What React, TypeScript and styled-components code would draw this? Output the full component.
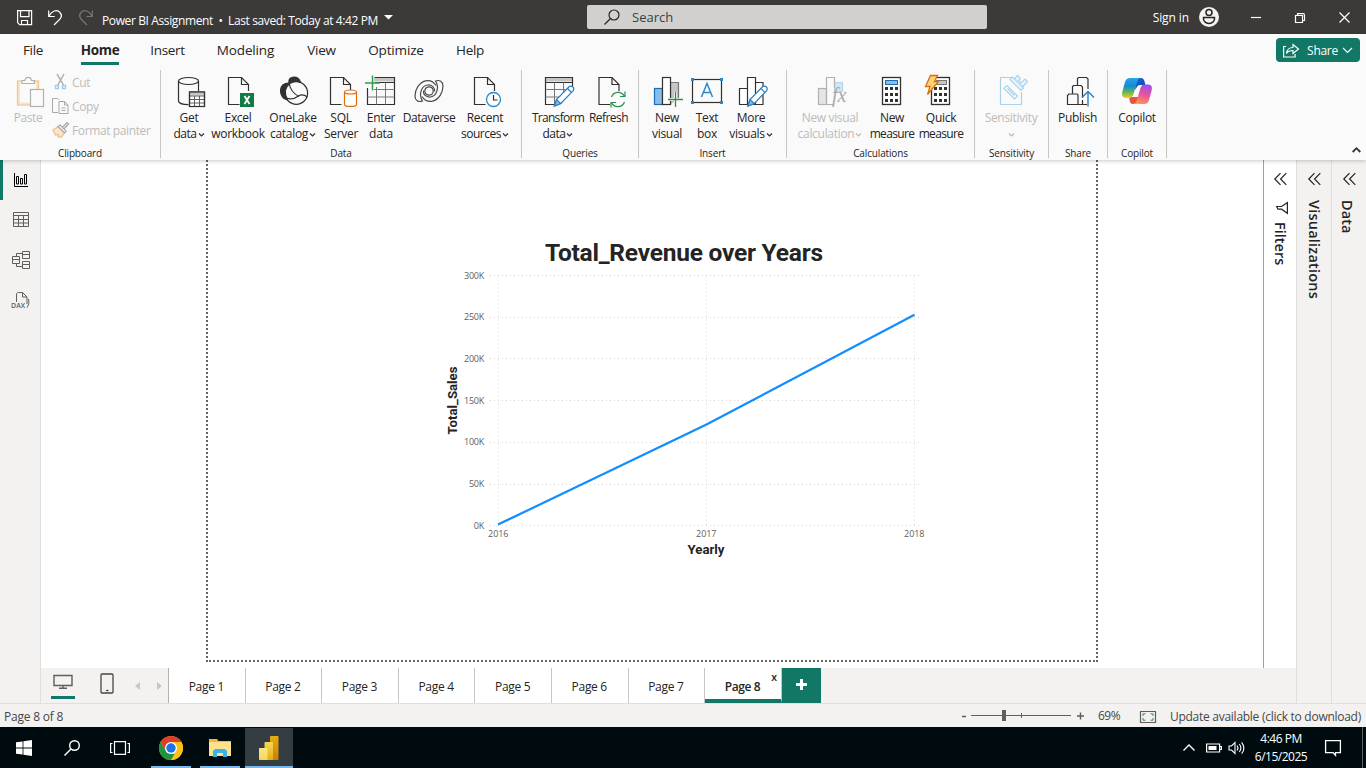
import React from "react";
import styled, { createGlobalStyle } from "styled-components";

const GREEN = "#117865";
const INK = "#323130";

const GlobalStyle = createGlobalStyle`
  * { box-sizing: border-box; }
  html, body { margin: 0; padding: 0; overflow: hidden; }
  body { font-family: "Open Sans", "Noto Sans", sans-serif; font-size: 12px; color: #252423; background: #fff; }
  svg { display: block; flex: none; overflow: visible; }
  button { font: inherit; color: inherit; border: 0; background: none; padding: 0; margin: 0; }
`;

const Screen = styled.div`
  width: 1366px;
  height: 768px;
  display: flex;
  flex-direction: column;
  overflow: hidden;
`;

/* ---------- Title bar ---------- */

const TitleBar = styled.header`
  height: 34px;
  flex: none;
  background: #3b3a39;
  color: #fff;
  display: flex;
  align-items: center;
`;

const QuickAccess = styled.div`
  width: 587px;
  display: flex;
  align-items: center;
  padding-left: 17px;
`;

const QuickIcons = styled.div`
  display: flex;
  gap: 15px;
  width: 85px;
  padding-top: 1px;
`;

const DocumentTitle = styled.span`
  white-space: pre;
  font-size: 12px;
  letter-spacing: -0.38px;
  padding-top: 6px;
  margin-right: 6px;
`;

const SearchBox = styled.div`
  width: 400px;
  height: 24px;
  background: #d2d0ce;
  border-radius: 2px;
  display: flex;
  align-items: center;
  gap: 12px;
  padding-left: 17px;
  color: #2b4743;
  font-size: 13px;
`;

const Account = styled.div`
  width: 232px;
  display: flex;
  align-items: center;
  justify-content: flex-end;
  gap: 10px;
  letter-spacing: -0.1px;
`;

const WindowButtons = styled.div`
  display: flex;
  margin-left: 15px;
`;

const WindowButton = styled.button`
  width: 44px;
  height: 34px;
  display: flex;
  align-items: center;
  justify-content: center;
  padding-top: 1px;
`;

/* ---------- Ribbon ---------- */

const Ribbon = styled.section`
  height: 126px;
  flex: none;
  background: #fafafa;
  box-shadow: 0 1px 4px rgba(0, 0, 0, 0.22);
  position: relative;
  z-index: 2;
`;

const RibbonTabs = styled.nav`
  height: 34px;
  display: flex;
  align-items: flex-start;
  padding-left: 23px;
  gap: 32px;
`;

const RibbonTab = styled.span<{ $w: number; $active?: boolean; $gap?: number; $ls?: number }>`
  width: ${(p) => p.$w}px;
  margin-right: ${(p) => p.$gap ?? 0}px;
  height: 31px;
  line-height: 32px;
  font-size: 13.5px;
  display: flex;
  justify-content: center;
  letter-spacing: ${(p) => p.$ls ?? -0.3}px;
  font-weight: ${(p) => (p.$active ? 700 : 400)};
  border-bottom: ${(p) => (p.$active ? `3px solid ${GREEN}` : "0")};
`;

const ShareButton = styled.button`
  margin: 4px 6px 0 auto;
  width: 84px;
  height: 24px;
  border-radius: 4px;
  background: ${GREEN};
  color: #fff;
  display: flex;
  align-items: center;
  justify-content: center;
  gap: 4px;
  letter-spacing: -0.3px;
`;

const ShareText = styled.span`
  margin-left: 3px;
  padding-top: 1px;
`;

const RibbonGroups = styled.div`
  display: flex;
  height: 92px;
  padding-top: 2px;
`;

const Group = styled.div<{ $w: number }>`
  width: ${(p) => p.$w}px;
  height: 88px;
  border-right: 1px solid #c8c6c4;
  display: flex;
  flex-direction: column;
`;

const GroupBody = styled.div<{ $pad: number }>`
  height: 76px;
  display: flex;
  padding-left: ${(p) => p.$pad}px;
`;

const GroupName = styled.div`
  font-size: 10px;
  line-height: 15px;
  text-align: center;
  letter-spacing: -0.15px;
`;

const BigButton = styled.button<{ $w: number; $disabled?: boolean }>`
  width: ${(p) => p.$w}px;
  height: 76px;
  padding-top: 5px;
  display: flex;
  flex-direction: column;
  align-items: center;
  color: ${(p) => (p.$disabled ? "#bdbbb9" : "#252423")};
`;

const BigButtonLine = styled.span<{ $ls?: number }>`
  height: 16px;
  line-height: 16px;
  font-size: 12px;
  white-space: nowrap;
  display: flex;
  align-items: center;
  gap: 1px;
  letter-spacing: ${(p) => p.$ls ?? -0.3}px;
  &:first-of-type { margin-top: 3px; }
`;

const SmallButtons = styled.div`
  display: flex;
  flex-direction: column;
  padding: 0 0 0 9px;
`;

const SmallButton = styled.button`
  height: 24px;
  display: flex;
  align-items: center;
  gap: 3px;
  color: #bdbbb9;
  letter-spacing: -0.38px;
  white-space: nowrap;
`;

const CollapseSlot = styled.div`
  flex: 1;
  display: flex;
  align-items: flex-end;
  justify-content: flex-end;
  padding: 0 5px 7px 0;
`;

/* ---------- Workspace ---------- */

const Workspace = styled.main`
  height: 543px;
  flex: none;
  display: flex;
`;

const ViewRail = styled.nav`
  width: 41px;
  background: #f3f2f1;
  border-right: 1px solid #e1dfdd;
`;

const RailItem = styled.div<{ $active?: boolean }>`
  height: 40px;
  display: flex;
  align-items: center;
  justify-content: center;
  border-left: 3px solid ${(p) => (p.$active ? GREEN : "transparent")};
  padding-right: 1px;
`;

const Center = styled.div`
  width: 1255px;
  display: flex;
  flex-direction: column;
`;

const CanvasRow = styled.div`
  height: 508px;
  display: flex;
`;

const Canvas = styled.div`
  width: 1222px;
  padding-left: 165px;
  background: #fff;
`;

const ReportPage = styled.div`
  width: 892px;
  height: 502px;
  border: 2px dotted #666;
  border-top: 0;
`;

const Pane = styled.aside<{ $w: number; $line: string; $bg: string }>`
  width: ${(p) => p.$w}px;
  background: ${(p) => p.$bg};
  border-left: 1px solid ${(p) => p.$line};
  display: flex;
  flex-direction: column;
  align-items: center;
  padding-top: 13px;
`;

const PaneTitle = styled.span<{ $top: number; $ls?: number; $pull?: number }>`
  writing-mode: vertical-rl;
  font-size: 14.5px;
  line-height: 18px;
  font-weight: 600;
  margin-top: ${(p) => p.$top}px;
  margin-right: ${(p) => p.$pull ?? 0}px;
  letter-spacing: ${(p) => p.$ls ?? -0.1}px;
  white-space: nowrap;
`;

const FilterMark = styled.div`
  margin: 17px 0 0 3px;
`;

const PageBar = styled.div`
  height: 35px;
  background: #f3f2f1;
  display: flex;
`;

const LayoutSwitch = styled.div`
  width: 128px;
  flex: none;
  display: flex;
  border-right: 1px solid #b3b0ad;
  padding-left: 10px;
`;

const LayoutOption = styled.div<{ $active?: boolean }>`
  width: 24px;
  flex: none;
  height: 31px;
  margin-right: 20px;
  display: flex;
  justify-content: center;
  padding-top: 5px;
  border-bottom: 3px solid ${(p) => (p.$active ? GREEN : "transparent")};
`;

const PageArrows = styled.div`
  display: flex;
  gap: 17px;
  padding-top: 14px;
  margin-left: -4px;
`;

const PageTab = styled.div<{ $active?: boolean }>`
  width: 76.6px;
  flex: none;
  height: 35px;
  background: #fff;
  border-right: 1px solid #c8c6c4;
  border-bottom: ${(p) => (p.$active ? `4px solid ${GREEN}` : "0")};
  line-height: 37px;
  font-size: 12px;
  font-weight: ${(p) => (p.$active ? 600 : 400)};
  letter-spacing: ${(p) => (p.$active ? -0.4 : -0.3)}px;
  text-align: center;
  padding-right: 1px;
  position: relative;
`;

const CloseMark = styled.span`
  position: absolute;
  right: 4px;
  top: 2px;
  font-size: 10.5px;
  line-height: 14px;
  font-weight: 600;
`;

const AddPage = styled.button`
  width: 39px;
  height: 35px;
  background: ${GREEN};
  display: flex;
  align-items: center;
  justify-content: center;
  padding-bottom: 2px;
`;

/* ---------- Status bar ---------- */

const StatusBar = styled.footer`
  height: 24px;
  flex: none;
  background: #f3f2f1;
  border-top: 1px solid #e1dfdd;
  display: flex;
  align-items: center;
  color: #484644;
  padding: 2px 4px 0;
  letter-spacing: -0.2px;
`;

const ZoomTools = styled.div`
  margin-left: auto;
  display: flex;
  align-items: center;
`;

const ZoomScale = styled.div`
  margin-top: -1px;
`;

const ZoomValue = styled.span`
  width: 30px;
  margin: -2px 12px 0 12px;
  letter-spacing: -0.5px;
`;

const UpdateNote = styled.span`
  width: 192px;
  margin-left: 14px;
  white-space: nowrap;
  letter-spacing: -0.27px;
`;

/* ---------- Taskbar ---------- */

const Taskbar = styled.footer`
  height: 41px;
  flex: none;
  background: #000b10;
  color: #fff;
  display: flex;
  align-items: stretch;
`;

const TaskItem = styled.div<{ $w: number; $running?: boolean; $focused?: boolean; $gap?: number }>`
  width: ${(p) => p.$w}px;
  margin-right: ${(p) => p.$gap ?? 0}px;
  margin-top: 1px;
  padding-top: ${(p) => (p.$running ? 2 : 0)}px;
  display: flex;
  align-items: center;
  justify-content: center;
  background: ${(p) => (p.$focused ? "#343d41" : "transparent")};
  border-bottom: ${(p) => (p.$running ? "2px solid #76b9ed" : "0")};
`;

const Tray = styled.div`
  margin-left: auto;
  display: flex;
  align-items: center;
`;

const Clock = styled.div`
  width: 62px;
  margin: 0 13px 0 5px;
  text-align: center;
  line-height: 18px;
  letter-spacing: -0.5px;
`;

const DesktopEdge = styled.div`
  width: 4px;
  height: 41px;
  margin-left: 21px;
  border-left: 1px solid #5c6366;
`;

/* ---------- Icons ---------- */

type IconProps = { w?: number; h?: number; children: React.ReactNode; color?: string; sw?: number };

const Icon = ({ w = 32, h = 32, color = INK, sw = 1.2, children }: IconProps) => (
  <svg width={w} height={h} viewBox={`0 0 ${w} ${h}`} fill="none" stroke={color} strokeWidth={sw}>
    {children}
  </svg>
);

const Caret = ({ color = INK }: { color?: string }) => (
  <svg width="7" height="5" viewBox="0 0 7 5" fill="none" stroke={color} strokeWidth="1.2">
    <path d="M1 1.500l2.500 2.500L6 1.500" />
  </svg>
);

const Sheet = ({ x }: { x: number }) => (
  <g>
    <path d={`M${x + 11} 29.5H${x}V2.5H${x + 13}L${x + 20} 9.5V16`} />
    <path d={`M${x + 13} 2.5V9.5H${x + 20}`} />
  </g>
);

const Pencil = ({ x }: { x: number }) => (
  <g stroke="#2b7fc0">
    <path d={`M${x} 31l2-6.5L${x + 14.5} 11.8c2.5-2 6 .8 4.2 3.8L${x + 6.3} 28.5z`} fill="#fff" />
    <path d={`M${x} 31l2-6.5 4.3 4z`} fill="#7fbdeb" />
    <path d={`M${x + 13} 13.5l4 4`} />
  </g>
);

const PasteIcon = () => (
  <Icon color="#b3b1af">
    <path d="M11 7H6.5V29H18M21 7h4.5v7" stroke="#f7e6c9" strokeWidth="3" />
    <path d="M10 6H5.5V30H18M22 6h4.5v8" stroke="#f2c48d" />
    <path d="M10 8.5V5.5h3a3.2 3.2 0 0 1 6.4 0h3v3z" fill="#fafafa" />
    <rect x="18.5" y="14.5" width="13" height="17" fill="#fafafa" />
  </Icon>
);

const CutIcon = () => (
  <Icon w={16} h={16} color="#aaa8a6">
    <path d="M4 0l6.5 11M11 0L4.8 11" strokeWidth="1.4" />
    <path d="M2.5 11.5h3v3h-3zM9.5 11.5h3v3h-3z" stroke="#9fcdea" strokeWidth="1.4" />
  </Icon>
);

const CopyIcon = () => (
  <Icon w={16} h={16} color="#aaa8a6" sw={1}>
    <path d="M5 14.5H-.5v-14H4.5L6 2" />
    <path d="M6 3.5h5.5l3.5 3.5v8.5H6zM11.5 3.5V7H15M8.5 10h4M8.5 12.5h4" />
  </Icon>
);

const PainterIcon = () => (
  <Icon w={16} h={16} color="#aaa8a6">
    <path d="M0 8l6-4 6 6-4 5.500-3-1 .5-2-3 .5z" fill="#fbe3cb" stroke="#f0bd8d" />
    <path d="M5 4.500l2-1.500 6 6-1.500 2zM9.500 5.500L14 .5l1.500 1.500-4.500 5" fill="#fafafa" />
  </Icon>
);

const GetDataIcon = () => (
  <Icon>
    <ellipse cx="15.5" cy="6" rx="10" ry="3.5" />
    <path d="M5.500 6v20c0 2 4 3.600 10 3.600M25.500 6v10" />
    <rect x="16.5" y="17" width="15" height="14.5" fill="#fff" />
    <path d="M17 19h14" stroke="#c8c6c4" strokeWidth="3" />
    <path d="M16.500 21h15M16.500 24.500h15M16.500 28h15M21.500 21v10.500M26.500 21v10.500" stroke="#605e5c" strokeWidth="1" />
    <path d="M16.500 17h15v14.500h-15z" />
  </Icon>
);

const ExcelIcon = () => (
  <Icon>
    <Sheet x={6.5} />
    <rect x="18" y="18" width="14" height="14" fill="#107c41" stroke="none" />
    <path d="M22.500 21l5 8M27.500 21l-5 8" stroke="#fff" strokeWidth="1.8" />
  </Icon>
);

const OneLakeIcon = () => (
  <Icon>
    <path d="M12 8C11 4 14 2 17 2s5.500 1.500 6.500 5.500C20 6 15 6 12 8z" fill={INK} />
    <path d="M11.500 8C8 11 7 19 10.500 25C6 24.500 3.500 20 3.500 15.500C3.500 11 7 8 11.500 8z" fill={INK} />
    <circle cx="19.3" cy="18" r="11.3" />
    <path d="M12 8c1 6 5 11 10 13.500M9.500 23c5 2 8 1 12-2 3-2 6-1 9 1" />
  </Icon>
);

const SqlIcon = () => (
  <Icon>
    <Sheet x={5.5} />
    <path d="M19.500 17v12.500c0 2.600 12 2.600 12 0V17" fill="#fff" stroke="#d8700d" />
    <ellipse cx="25.5" cy="17" rx="6" ry="2" fill="#fff" stroke="#d8700d" />
  </Icon>
);

const EnterDataIcon = () => (
  <Icon>
    <path d="M9 4.500h20" stroke="#c8c6c4" strokeWidth="4" />
    <path d="M2.500 13v16.500h27v-27H9.500M10 7.500h19.500" />
    <path d="M9 14.500h20.500M2.500 22h27M11.500 12v17.500M20.500 7.500v22" stroke="#797775" strokeWidth="1" />
    <path d="M0 8h15M7.500 0.500v15" stroke="#2e9e4f" strokeWidth="1.5" />
  </Icon>
);

const DataverseIcon = () => (
  <Icon color="#4b4a48">
    <path d="M23 10.500C20.500 6.500 16.500 5 12.500 5.800C6 7.500 2 14.500 2 21C2 25.500 5.500 27.500 9.500 26C5.500 20 8 11 14.500 10C19 9.500 22 12.500 21.500 16.500" />
    <path d="M9 21.500C11.500 25.500 15.500 27 19.500 26.200C26 24.500 30 17.500 30 11C30 6.500 26.500 4.500 22.500 6C26.500 12 24 21 17.500 22C13 22.500 10 19.500 10.500 15.500" />
    <circle cx="16" cy="16" r="4.2" />
  </Icon>
);

const RecentIcon = () => (
  <Icon>
    <Sheet x={5.5} />
    <circle cx="24.5" cy="24.5" r="7" fill="#fff" stroke="#2b88c8" strokeWidth="1.3" />
    <path d="M24.500 20v5h4" />
  </Icon>
);

const TransformIcon = () => (
  <Icon>
    <path d="M4 4.500h26" stroke="#c8c6c4" strokeWidth="4" />
    <path d="M15 29.500H3.500v-27h27V12M3.500 7.500h27" />
    <path d="M3.500 14.500h20M3.500 22h14M12.500 7.500v22M21.500 7.500v10" stroke="#797775" strokeWidth="1" />
    <Pencil x={12.5} />
  </Icon>
);

const RefreshIcon = () => (
  <Icon>
    <Sheet x={6} />
    <circle cx="25" cy="24.5" r="8.5" fill="#fafafa" stroke="none" />
    <path d="M18.500 22a7 7 0 0 1 13-0.500M31.500 27a7 7 0 0 1-13 0.500M32 16.500v5h-5M18 32.500v-5h5" stroke="#2e8e4f" strokeWidth="1.2" />
  </Icon>
);

const NewVisualIcon = () => (
  <Icon>
    <rect x="3.5" y="13.5" width="8" height="16" fill="#83beec" stroke="#1f6cb0" />
    <path d="M19.500 29.500V7.500h8v16" fill="#c8c6c4" stroke="#797775" />
    <rect x="11.5" y="2.5" width="8" height="27" fill="#fff" />
    <path d="M17 24.500h15M24.500 17v15" stroke="#fafafa" strokeWidth="3" />
    <path d="M17 24.500h15M24.500 17v15" stroke="#2e8e4f" strokeWidth="1.3" />
  </Icon>
);

const TextBoxIcon = () => (
  <Icon>
    <rect x="1.5" y="4.5" width="29" height="23" />
    <path d="M10.500 22L16 8.500 21.500 22M12.500 17.500h7" stroke="#2b88c8" strokeWidth="1.5" />
    <path d="M0 3h3v3H0zM29 3h3v3h-3zM0 26h3v3H0zM29 26h3v3h-3z" fill="#2b88c8" stroke="none" />
  </Icon>
);

const MoreVisualsIcon = () => (
  <Icon>
    <path d="M4.500 13.500h8v16h-8zM12.500 29.500v-27h8v27zM20.500 7.500h7.500v22h-7.500" fill="#fff" />
    <Pencil x={13} />
  </Icon>
);

const VisualCalcIcon = () => (
  <Icon color="#b3b1af">
    <rect x="20.5" y="7.5" width="8" height="9" fill="#cfe6f6" stroke="#b5d8ef" />
    <rect x="4.5" y="13.5" width="8" height="16" fill="#e6e5e3" />
    <path d="M19 29.500h-6.500v-27h8V13" />
    <text x="18" y="27" fontFamily="Liberation Serif" fontStyle="italic" fontSize="20" fill="#aaa8a6" stroke="none">fx</text>
  </Icon>
);

const Keys = ({ x }: { x: number }) => (
  <g fill={INK} stroke="none">
    {[12, 18, 24].map((y) => [0, 5, 10].map((dx) => <rect key={`${y}-${dx}`} x={x + dx} y={y} width="3" height="3" />))}
  </g>
);

const MeasureIcon = () => (
  <Icon sw={1.3}>
    <rect x="6.5" y="2.5" width="18" height="27" fill="#fff" />
    <rect x="9.5" y="5.5" width="12" height="4" fill="#83beec" stroke="#1f6cb0" strokeWidth="1" />
    <Keys x={9} />
  </Icon>
);

const QuickMeasureIcon = () => (
  <Icon sw={1.3}>
    <rect x="6.5" y="2.5" width="18" height="27" fill="#fff" />
    <rect x="11.5" y="5.5" width="10" height="4" fill="#c8c6c4" stroke="#797775" strokeWidth="1" />
    <Keys x={9} />
    <path d="M5.500 .5h7L9.500 6.500h4L2.500 19.500l2.500-8H.5z" fill="#fcd27a" stroke="#d8700d" strokeWidth="1.3" />
  </Icon>
);

const SensitivityIcon = () => (
  <Icon color="#a9d3ec">
    <path d="M16 2.500H5.500v27h21V17" />
    <path d="M9 13.500l3-3L22.500 21l-3 3zM12.500 13.500l7 7" />
    <path d="M15 4.500l2.500-2.500L28.500 13 26 15.500zM19.500 4l3-3.500 3 3-2 2 2.500 2.500 4-4 2.500 2.500-5 5.500" fill="#e9f4fb" />
  </Icon>
);

const PublishIcon = () => (
  <Icon>
    <path d="M5.500 29.500v-9l1.500-1.500h8l1 1v9.500zM10.500 19v-7.500l1-1h7.500l1.500 1.500v11M15.500 10V3.500l1-1h8l1.500 1.500V14M16 29.500h9M20.500 25v4.500" />
    <path d="M26 31.500V17M20 22.500l6-6 6 6" stroke="#2b7fc0" strokeWidth="1.4" />
  </Icon>
);

const CopilotIcon = () => (
  <svg width="32" height="32" viewBox="0 0 32 32">
    <defs>
      <linearGradient id="cpA" x1="0" y1="0" x2="0" y2="1">
        <stop offset="0" stopColor="#22a6ee" />
        <stop offset=".4" stopColor="#1789d6" />
        <stop offset=".7" stopColor="#5fb75c" />
        <stop offset="1" stopColor="#f3cf1d" />
      </linearGradient>
      <linearGradient id="cpB" x1="0.6" y1="0" x2="0.3" y2="1">
        <stop offset="0" stopColor="#a24de8" />
        <stop offset=".5" stopColor="#e8559a" />
        <stop offset="1" stopColor="#ff9a55" />
      </linearGradient>
      <linearGradient id="cpC" x1="0" y1="0" x2="1" y2="1">
        <stop offset="0" stopColor="#0b6fd8" />
        <stop offset="1" stopColor="#1b3fae" />
      </linearGradient>
    </defs>
    <path d="M13 3h7c3 0 3.500 3 4.500 7h-5c-3 0-4 2-5 5z" fill="url(#cpC)" />
    <path d="M8 22h9c2-1 3-4 3.500-7l-4 10c-1 3-2 4-4.500 4-3.500 0-3-3-4-7z" fill="#e9543c" />
    <path d="M9 3h11c-2.500 0-3.300 2-4 4.500L12.500 19c-.8 2.500-2 4-5 4H5c-4 0-4.500-3-3.500-7L4 7c1-3 2.500-4 5-4z" fill="url(#cpA)" />
    <path d="M23 29H12c2.500 0 3.300-2 4-4.500L19.500 13c.8-2.500 2-3.500 5-3.500H27c4 0 4.500 3 3.500 6.500L28 25c-1 3-2.500 4-5 4z" fill="url(#cpB)" />
  </svg>
);

/* ---------- Ribbon content ---------- */

type Command = { w: number; icon: React.ReactNode; l1: string; l2?: string; caret?: boolean; off?: boolean; s1?: number; s2?: number };

const BigCommand = ({ w, icon, l1, l2, caret, off, s1, s2 }: Command) => (
  <BigButton $w={w} $disabled={off}>
    {icon}
    <BigButtonLine $ls={s1}>{l1}</BigButtonLine>
    <BigButtonLine $ls={s2}>
      {l2}
      {caret && <Caret color={off ? "#bdbbb9" : INK} />}
    </BigButtonLine>
  </BigButton>
);

const groups: { name: string; w: number; pad: number; items: Command[] }[] = [
  {
    name: "Data", w: 361, pad: 4, items: [
      { w: 48, icon: <GetDataIcon />, l1: "Get", l2: "data", caret: true, s2: -0.45 },
      { w: 50, icon: <ExcelIcon />, l1: "Excel", l2: "workbook" },
      { w: 60, icon: <OneLakeIcon />, l1: "OneLake", l2: "catalog", caret: true },
      { w: 36, icon: <SqlIcon />, l1: "SQL", l2: "Server" },
      { w: 44, icon: <EnterDataIcon />, l1: "Enter", l2: "data" },
      { w: 52, icon: <DataverseIcon />, l1: "Dataverse", s1: -0.45 },
      { w: 60, icon: <RecentIcon />, l1: "Recent", l2: "sources", caret: true, s2: -0.5 },
    ],
  },
  {
    name: "Queries", w: 117, pad: 8, items: [
      { w: 56, icon: <TransformIcon />, l1: "Transform", l2: "data", caret: true, s1: -0.7, s2: -0.5 },
      { w: 45, icon: <RefreshIcon />, l1: "Refresh", s1: -0.55 },
    ],
  },
  {
    name: "Insert", w: 148, pad: 9, items: [
      { w: 38, icon: <NewVisualIcon />, l1: "New", l2: "visual" },
      { w: 42, icon: <TextBoxIcon />, l1: "Text", l2: "box" },
      { w: 46, icon: <MoreVisualsIcon />, l1: "More", l2: "visuals", caret: true },
    ],
  },
  {
    name: "Calculations", w: 188, pad: 6, items: [
      { w: 74, icon: <VisualCalcIcon />, l1: "New visual", l2: "calculation", caret: true, off: true, s1: -0.35, s2: -0.3 },
      { w: 50, icon: <MeasureIcon />, l1: "New", l2: "measure", s2: -0.65 },
      { w: 48, icon: <QuickMeasureIcon />, l1: "Quick", l2: "measure", s2: -0.65 },
    ],
  },
  { name: "Sensitivity", w: 74, pad: 6, items: [{ w: 60, icon: <SensitivityIcon />, l1: "Sensitivity", caret: true, off: true }] },
  { name: "Share", w: 59, pad: 6, items: [{ w: 45, icon: <PublishIcon />, l1: "Publish" }] },
  { name: "Copilot", w: 59, pad: 6, items: [{ w: 46, icon: <CopilotIcon />, l1: "Copilot" }] },
];

/* ---------- Chart ---------- */

const yTicks = ["300K", "250K", "200K", "150K", "100K", "50K", "0K"];
const xTicks = ["2016", "2017", "2018"];

const RevenueChart = () => {
  const top = 115.5;
  const step = 41.7;
  const left = 290.5;
  const gap = 208;
  const bottom = top + step * 6;
  return (
    <svg width="888" height="500" viewBox="0 0 888 500" fontFamily="Roboto, sans-serif">
      <text x="337" y="100.5" fontSize="24.5" fontWeight="700" fill="#252423" textLength="278" lengthAdjust="spacing">
        Total_Revenue over Years
      </text>
      <g stroke="#d6d4d2" strokeWidth="1" strokeDasharray="1 3">
        {yTicks.map((t, i) => (
          <path key={t} d={`M282 ${Math.round(top + step * i - 0.5) + 0.5}H711`} />
        ))}
        {xTicks.map((t, i) => (
          <path key={t} d={`M${left + gap * i} ${top}V${bottom}`} />
        ))}
      </g>
      <g fontSize="9" fill="#605e5c" fontFamily="Open Sans, sans-serif">
        {yTicks.map((t, i) => (
          <text key={t} x="276" y={top + step * i + 3} textAnchor="end" letterSpacing="-0.25">{t}</text>
        ))}
        {xTicks.map((t, i) => (
          <text key={t} x={left + gap * i - 0.3} y="377" textAnchor="middle" letterSpacing="-0.1">{t}</text>
        ))}
      </g>
      <polyline points="290,364.6 498.5,264.5 706.5,154.7" fill="none" stroke="#118dff" strokeWidth="2.2" />
      <g fontSize="12.5" fontWeight="700" fill="#252423">
        <text x="479.5" y="394" textLength="37" lengthAdjust="spacingAndGlyphs">Yearly</text>
        <text transform="translate(249 274.5) rotate(-90)" textLength="68" lengthAdjust="spacingAndGlyphs">Total_Sales</text>
      </g>
    </svg>
  );
};

const Chevrons = () => (
  <Icon w={13} h={12} color="#252423">
    <path d="M6.500 .2L.8 6l5.700 5.800M12.300 .2L6.600 6l5.700 5.800" />
  </Icon>
);

export default function App() {
  return (
    <Screen>
      <GlobalStyle />
      <TitleBar>
        <QuickAccess>
          <QuickIcons>
            <Icon w={16} h={16} color="#fff">
              <path d="M.6.6h14v14h-12l-2-2zM3.500 .6v6h8.500v-6M4.500 14.500v-4h6v4" />
            </Icon>
            <Icon w={15} h={16} color="#fff">
              <path d="M.7 .5v6h6M.9 6.300C4 .5 8.500-.5 11.500 2c3 3 1.500 6 0 7.500L6 15" />
            </Icon>
            <Icon w={15} h={16} color="#797775">
              <path d="M14.300 .5v6h-6M14.100 6.300C11 .5 6.500-.5 3.500 2c-3 3-1.500 6 0 7.500L9 15" />
            </Icon>
          </QuickIcons>
          <DocumentTitle>Power BI Assignment  •  Last saved: Today at 4:42 PM</DocumentTitle>
          <svg width="9" height="5" viewBox="0 0 9 5"><path d="M0 0h9L4.500 4.500z" fill="#fff" /></svg>
        </QuickAccess>
        <SearchBox>
          <Icon w={16} h={16} color="#252423">
            <circle cx="10" cy="6" r="5" />
            <path d="M6.500 9.500L.5 15.500" />
          </Icon>
          Search
        </SearchBox>
        <Account>
          Sign in
          <svg width="20" height="20" viewBox="0 0 20 20" fill="none" stroke="#252423" strokeWidth="1.5">
            <circle cx="10" cy="10" r="10" fill="#f3f2f1" stroke="none" />
            <circle cx="10" cy="5.5" r="3" />
            <path d="M4.500 10.500h11c.5 3.500-2 6-5.500 6s-6-2.500-5.500-6z" />
          </svg>
        </Account>
        <WindowButtons>
          <WindowButton><Icon w={10} h={10} color="#fff"><path d="M0 4.500h10" /></Icon></WindowButton>
          <WindowButton>
            <Icon w={10} h={10} color="#fff"><path d="M.5 2.500h7v7h-7zM2.500 2.500V.6H8a1.500 1.500 0 0 1 1.500 1.500V7.500H7.500" /></Icon>
          </WindowButton>
          <WindowButton><Icon w={11} h={11} color="#fff"><path d="M.5 .5l10 10M10.500 .5l-10 10" /></Icon></WindowButton>
        </WindowButtons>
      </TitleBar>

      <Ribbon>
        <RibbonTabs>
          <RibbonTab $w={20} $gap={6}>File</RibbonTab>
          <RibbonTab $w={38} $active>Home</RibbonTab>
          <RibbonTab $w={33}>Insert</RibbonTab>
          <RibbonTab $w={59} $ls={-0.15}>Modeling</RibbonTab>
          <RibbonTab $w={29}>View</RibbonTab>
          <RibbonTab $w={56} $ls={-0.15}>Optimize</RibbonTab>
          <RibbonTab $w={28}>Help</RibbonTab>
          <ShareButton>
            <Icon w={17} h={15} color="#fff">
              <path d="M3 3.500H.6v10.500h11.500v-3M3.500 10.500c.5-4 3-6 6.500-6v-3l5.500 4.500-5.500 4.500v-3c-3 0-5 .5-6.500 3z" />
            </Icon>
            <ShareText>Share</ShareText>
            <Icon w={11} h={7} color="#fff"><path d="M1 1l4.500 4.500L10 1" /></Icon>
          </ShareButton>
        </RibbonTabs>
        <RibbonGroups>
          <Group $w={161}>
            <GroupBody $pad={12}>
              <BigCommand w={32} icon={<PasteIcon />} l1="Paste" off s1={-0.45} />
              <SmallButtons>
                <SmallButton><CutIcon />Cut</SmallButton>
                <SmallButton><CopyIcon />Copy</SmallButton>
                <SmallButton><PainterIcon />Format painter</SmallButton>
              </SmallButtons>
            </GroupBody>
            <GroupName>Clipboard</GroupName>
          </Group>
          {groups.map((g) => (
            <Group key={g.name} $w={g.w}>
              <GroupBody $pad={g.pad}>
                {g.items.map((c) => <BigCommand key={c.l1 + c.l2} {...c} />)}
              </GroupBody>
              <GroupName>{g.name}</GroupName>
            </Group>
          ))}
          <CollapseSlot>
            <Icon w={9} h={6} color="#323130" sw={1.8}><path d="M.7 5l3.800-3.800L8.300 5" /></Icon>
          </CollapseSlot>
        </RibbonGroups>
      </Ribbon>

      <Workspace>
        <ViewRail>
          <RailItem $active>
            <Icon w={14} h={14} color="#000" sw={1}>
              <path d="M.5 0v13.500H14M2.500 3.500h2v7.500h-2zM6.500 5.500h2v5.500h-2zM10.500 1.500h2v9.500h-2z" />
            </Icon>
          </RailItem>
          <RailItem>
            <Icon w={16} h={16} color="#605e5c" sw={1}>
              <path d="M.5 .5h15v14H.5zM.5 3.500h15M.5 7.500h15M.5 11h15M5.500 3.500v11M10.500 3.500v11" />
            </Icon>
          </RailItem>
          <RailItem>
            <Icon w={18} h={18} color="#605e5c" sw={1}>
              <path d="M.5 5.500h7v7h-7zM.5 8.500h7M10.500 .5h7v7h-7zM10.500 3.500h7M10.500 10.500h7v7h-7zM10.500 13.500h7M4.500 5.500v-3h6M4.500 12.500v3h6" />
            </Icon>
          </RailItem>
          <RailItem>
            <Icon w={18} h={17} color="#605e5c" sw={1}>
              <path d="M4.500 10V3c0-1.500 .5-2.500 2-2.500h4l4.500 4.500v7M10.500 .5V5H15M16.500 7c.7 3 .5 6-1.500 8.500" />
              <text x="-1" y="15.8" fontSize="7" fontFamily="Open Sans" fontWeight="600" fill="#605e5c" stroke="none">DAX</text>
            </Icon>
          </RailItem>
        </ViewRail>
        <Center>
          <CanvasRow>
            <Canvas>
              <ReportPage><RevenueChart /></ReportPage>
            </Canvas>
            <Pane $w={33} $line="#a19f9d" $bg="#fff">
              <Chevrons />
              <FilterMark>
                <Icon w={12} h={12} color="#252423" sw={1.2}><path d="M11.400 .7v10.600L5.500 7.200H2L.7 4.500h4.800z" /></Icon>
              </FilterMark>
              <PaneTitle $top={8} $ls={0}>Filters</PaneTitle>
            </Pane>
          </CanvasRow>
          <PageBar>
            <LayoutSwitch>
              <LayoutOption $active>
                <Icon w={21} h={16} color="#605e5c" sw={1.4}><path d="M1 2.500h18v10H1zM10 12.500v3M6 15.300h8" /></Icon>
              </LayoutOption>
              <LayoutOption>
                <Icon w={14} h={21} color="#484644" sw={1.3}>
                  <rect x="1" y="1" width="12" height="19" rx="1" />
                  <path d="M6 17.500h2.500" />
                </Icon>
              </LayoutOption>
              <PageArrows>
                <svg width="5" height="8" viewBox="0 0 5 8"><path d="M5 0v8L0 4z" fill="#c8c6c4" /></svg>
                <svg width="5" height="8" viewBox="0 0 5 8"><path d="M0 0v8l5-4z" fill="#c8c6c4" /></svg>
              </PageArrows>
            </LayoutSwitch>
            {[1, 2, 3, 4, 5, 6, 7, 8].map((n) => (
              <PageTab key={n} $active={n === 8}>
                Page {n}
                {n === 8 && <CloseMark>x</CloseMark>}
              </PageTab>
            ))}
            <AddPage>
              <Icon w={11} h={11} color="#fff" sw={3}><path d="M0 5.500h11M5.500 0v11" /></Icon>
            </AddPage>
          </PageBar>
        </Center>
        <Pane $w={35} $line="#e1dfdd" $bg="#f3f2f1">
          <Chevrons />
          <PaneTitle $top={15} $ls={0.2} $pull={1}>Visualizations</PaneTitle>
        </Pane>
        <Pane $w={35} $line="#e1dfdd" $bg="#f3f2f1">
          <Chevrons />
          <PaneTitle $top={15} $ls={0.1} $pull={5}>Data</PaneTitle>
        </Pane>
      </Workspace>

      <StatusBar>
        <span>Page 8 of 8</span>
        <ZoomTools>
          <ZoomScale>
            <Icon w={124} h={12} color="#605e5c" sw={1}>
              <path d="M0 6.500h4M115 6h7M118.500 2.500v7" strokeWidth="1.4" />
              <path d="M9 5.500h100M59.500 3v5" />
              <rect x="40" y="0" width="4" height="11" fill="#605e5c" stroke="none" />
            </Icon>
          </ZoomScale>
          <ZoomValue>69%</ZoomValue>
          <Icon w={16} h={12} color="#605e5c" sw={1}>
            <path d="M.5 .5h15v11H.5z" strokeWidth="1.2" />
            <path d="M3 5V2.800h2.500M10.500 2.800H13V5M13 7v2.200h-2.500M5.500 9.200H3V7" stroke="#3d8b4c" />
          </Icon>
          <UpdateNote>Update available (click to download)</UpdateNote>
        </ZoomTools>
      </StatusBar>

      <Taskbar>
        <TaskItem $w={48}>
          <svg width="16" height="16" viewBox="0 0 16 16" fill="#fff">
            <path d="M0 2.300L6.600 1.400V7.600H0zM7.400 1.300L16 0V7.600H7.400zM0 8.400H6.600V14.600L0 13.700zM7.400 8.400H16V16L7.400 14.700z" />
          </svg>
        </TaskItem>
        <TaskItem $w={48}>
          <Icon w={16} h={16} color="#fff" sw={1.4}><circle cx="10.5" cy="5.5" r="4.8" /><path d="M7 9L.5 15.500" /></Icon>
        </TaskItem>
        <TaskItem $w={48} $gap={7}>
          <Icon w={20} h={14} color="#fff"><path d="M4.500 .6h11v12.800h-11zM2.500 2.500H.6v9h1.900M17.500 2.500h1.900v9h-1.900" /></Icon>
        </TaskItem>
        <TaskItem $w={40} $running $gap={9}>
          <svg width="24" height="24" viewBox="0 0 24 24">
            <circle cx="12" cy="12" r="12" fill="#fbc116" />
            <path d="M12 12L6.800 15 1.600 6A12 12 0 0 1 22.400 6H12z" fill="#e33b2e" />
            <path d="M1.600 6L6.800 15 12 18h5.200L12 24A12 12 0 0 1 1.600 6z" fill="#229342" />
            <path d="M17.200 15L12 24a12 12 0 0 0 10.400-18H12z" fill="#fbc116" />
            <circle cx="12" cy="12" r="6" fill="#fff" />
            <circle cx="12" cy="12" r="4.7" fill="#1a73e8" />
          </svg>
        </TaskItem>
        <TaskItem $w={40} $running $gap={5}>
          <svg width="22" height="18" viewBox="0 0 22 18">
            <path d="M0 0h8l1.500 2H22v4H0z" fill="#f0b93a" />
            <path d="M0 3h22v14H0z" fill="#fde18d" />
            <path d="M4 18v-6l2-2h10l2 2v6h-4v-4H8v4z" fill="#39b2ea" />
          </svg>
        </TaskItem>
        <TaskItem $w={48} $running $focused>
          <svg width="20" height="24" viewBox="0 0 20 24">
            <defs>
              <linearGradient id="pbA" x1="0" y1="0" x2="0" y2="1"><stop offset="0" stopColor="#e6ad10" /><stop offset="1" stopColor="#c87e0e" /></linearGradient>
              <linearGradient id="pbB" x1="0" y1="0" x2="0" y2="1"><stop offset="0" stopColor="#f6d751" /><stop offset="1" stopColor="#e6ad10" /></linearGradient>
              <linearGradient id="pbC" x1="0" y1="0" x2="0" y2="1"><stop offset="0" stopColor="#f9e589" /><stop offset="1" stopColor="#f6d751" /></linearGradient>
            </defs>
            <rect x="11" y="0" width="8.5" height="24" rx=".8" fill="url(#pbA)" />
            <rect x="5.5" y="6" width="8.5" height="18" rx=".8" fill="url(#pbB)" />
            <rect x="0" y="12" width="8.5" height="12" rx=".8" fill="url(#pbC)" />
          </svg>
        </TaskItem>
        <Tray>
          <Icon w={12} h={7} color="#fff" sw={1.4}><path d="M.5 6.500L6 1l5.500 5.500" /></Icon>
          <svg width="38" height="12" viewBox="-11 0 38 12" fill="none" stroke="#fff" strokeWidth="1.2">
            <path d="M0.600 2h13v8h-13zM14 4.500h1.400v3H14" />
            <rect x="2.5" y="4" width="8" height="4" fill="#fff" stroke="none" />
          </svg>
          <svg width="12" height="14" viewBox="4 0 12 14" fill="none" stroke="#fff" strokeWidth="1.1">
            <path d="M0 5h2.500l3.500-3.500v11L2.500 9H0zM8 4.500c1.200 1.500 1.200 3.500 0 5M10.300 3c2 2.500 2 5.500 0 8M12.600 1.300c2.800 3.500 2.800 8 0 11.400" />
          </svg>
          <Clock>4:46 PM<br />6/15/2025</Clock>
          <Icon w={16} h={16} color="#fff" sw={1.3}><path d="M.6 .6h14.800v12H10.500v2.700L8 12.600H.6z" /></Icon>
          <DesktopEdge />
        </Tray>
      </Taskbar>
    </Screen>
  );
}
